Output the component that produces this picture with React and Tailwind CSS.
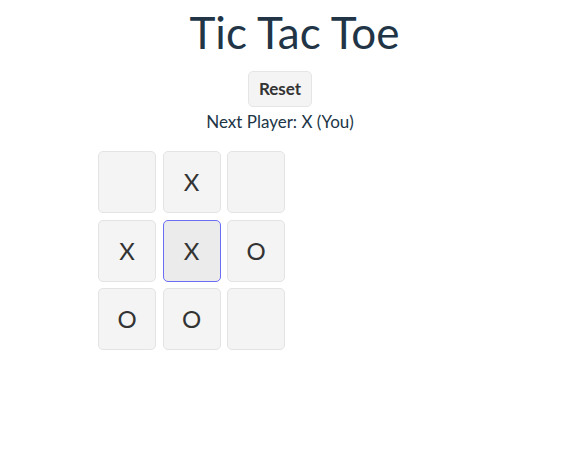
import React, { useState } from "react";

const initialBoard = ["", "X", "", "X", "X", "O", "O", "O", ""];

const Cell = ({ value, active, onClick }) => (
  <button
    onClick={onClick}
    className={
      active
        ? "w-[58px] h-[62px] rounded-[5px] border border-[#6c6cf5] bg-[#ebebeb] text-[24px] text-[#333] flex items-center justify-center"
        : "w-[58px] h-[62px] rounded-[5px] border border-[#e3e3e3] bg-[#f4f4f4] text-[24px] text-[#333] flex items-center justify-center"
    }
  >
    {value}
  </button>
);

export default function App() {
  const [board, setBoard] = useState(initialBoard);

  return (
    <div className="w-[567px] h-[469px] bg-white text-[#213547] font-['Lato','Noto_Sans',sans-serif]">
      <div className="flex flex-col items-center pt-[6px]">
        <h1 className="text-[44px] leading-[52px] ml-[22px]">Tic Tac Toe</h1>
        <button
          onClick={() => setBoard(Array(9).fill(""))}
          className="mt-[13px] mr-[7px] w-[64px] h-[36px] rounded-[5px] border border-[#e5e5e5] bg-[#f4f4f4] text-[17px] font-bold text-[#333]"
        >
          Reset
        </button>
        <p className="text-[17px] leading-[24px] mt-[3px] mr-[7px]">Next Player: X (You)</p>
      </div>
      <div className="grid grid-cols-[58px_58px_58px] gap-x-[6.5px] gap-y-[6.5px] ml-[98px] mt-[17px] w-max">
        {board.map((v, i) => (
          <Cell key={i} value={v} active={i === 4} />
        ))}
      </div>
    </div>
  );
}
